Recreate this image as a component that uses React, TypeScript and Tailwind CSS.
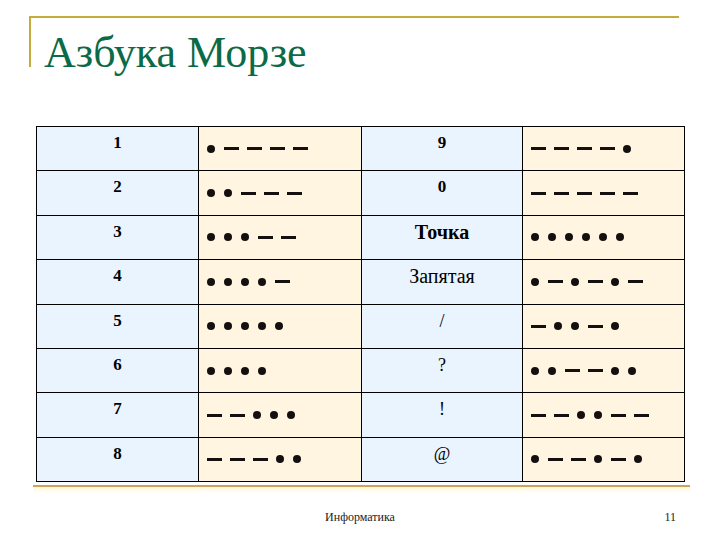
import React from "react";

type Row = { a: string; am: string; b: string; bm: string; bCls: string };

const base =
  "border-[1.5px] border-black bg-[#eaf4fe] text-center align-top pt-[6px] leading-[20px] text-black";
const boldNum = base + " text-[17px] font-bold";
const boldWord = base + " text-[20px] font-bold";
const normWord = base + " text-[20px] font-normal";
const normSym = base + " text-[18px] font-normal";

const rows: Row[] = [
  { a: "1", am: ".----", b: "9", bm: "----.", bCls: boldNum },
  { a: "2", am: "..---", b: "0", bm: "-----", bCls: boldNum },
  { a: "3", am: "...--", b: "Точка", bm: "......", bCls: boldWord },
  { a: "4", am: "....-", b: "Запятая", bm: ".-.-.-", bCls: normWord },
  { a: "5", am: ".....", b: "/", bm: "-..-.", bCls: normSym },
  { a: "6", am: "....", b: "?", bm: "..--..", bCls: normSym },
  { a: "7", am: "--...", b: "!", bm: "--..--", bCls: normSym },
  { a: "8", am: "---..", b: "@", bm: ".--.-.", bCls: normSym },
];

function Morse({ code }: { code: string }) {
  return (
    <div className="flex items-center gap-[8px]">
      {code.split("").map((c, i) =>
        c === "." ? (
          <span key={i} className="block w-[8px] h-[8px] mr-[1px] rounded-full bg-[#141010]" />
        ) : (
          <span key={i} className="block w-[15px] h-[3px] bg-[#141010]" />
        )
      )}
    </div>
  );
}

export default function App() {
  const serif = { fontFamily: '"Liberation Serif", "Times New Roman", serif' };
  return (
    <div className="w-[720px] h-[540px] bg-white flex flex-col overflow-hidden" style={serif}>
      <div className="mt-[16px] ml-[29px] w-[650px] h-[51px] border-t-2 border-l-2 border-[#c4ac3c]">
        <div className="pl-[13px] mt-[13px] text-[44px] leading-[44px] text-[#0b6a47] whitespace-nowrap">
          Азбука Морзе
        </div>
      </div>

      <table className="mt-[59px] ml-[36px] w-[648px] border-collapse table-fixed">
        <colgroup>
          <col className="w-[162px]" />
          <col className="w-[163px]" />
          <col className="w-[161px]" />
          <col className="w-[162px]" />
        </colgroup>
        <tbody>
          {rows.map((r, i) => (
            <tr key={i} className="h-[44.4px]">
              <td className={boldNum}>{r.a}</td>
              <td className="border-[1.5px] border-black bg-[#fff5e0] align-middle pl-[8px]">
                <Morse code={r.am} />
              </td>
              <td className={r.bCls}>{r.b}</td>
              <td className="border-[1.5px] border-black bg-[#fff5e0] align-middle pl-[8px]">
                <Morse code={r.bm} />
              </td>
            </tr>
          ))}
        </tbody>
      </table>

      <div className="mt-[3px] ml-[33px] w-[657px] h-[2px] bg-[#c9a55c]" />
      <div className="ml-[33px] w-[657px] h-[6px] bg-gradient-to-b from-[#fff6d8] to-white" />

      <div className="mt-[17px] w-[720px] grid grid-cols-[1fr_auto_1fr] items-center text-[12px] leading-[14px] text-[#222]">
        <div />
        <div>Информатика</div>
        <div className="flex justify-end pr-[44px]">11</div>
      </div>
    </div>
  );
}
